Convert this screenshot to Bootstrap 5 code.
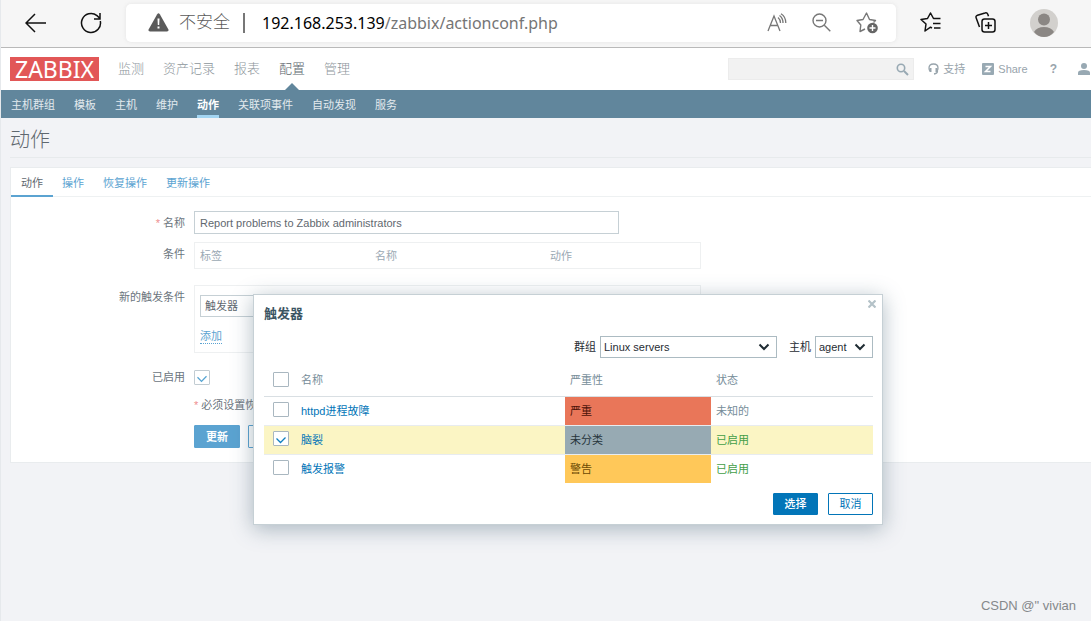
<!DOCTYPE html>
<html lang="zh-CN">
<head>
<meta charset="utf-8">
<meta name="viewport" content="width=device-width, initial-scale=1">
<title>动作</title>
<link href="https://cdn.jsdelivr.net/npm/bootstrap@5.3.0/dist/css/bootstrap.min.css" rel="stylesheet">
<style>
  body { font: 11px/16px "Liberation Sans", "Noto Sans CJK SC", sans-serif; color: #6b757d; background: #f2f3f6; min-height: 100vh; border-left: 1px solid #e6e9ec; overflow-x: hidden; }
  a { text-decoration: none; color: #5ba3d1; }
  svg { display: block; flex: none; }
  .plain-btn { border: 0; background: none; padding: 0; color: inherit; }
  /* browser toolbar */
  .browser-bar { height: 48px; background: #f6f6f6; border-bottom: 1px solid #b9b9b9; padding: 0 33px 2px 24px; color: #111; }
  .reload { margin-left: 33px; }
  .address { height: 38px; margin-left: 24px; background: #fff; border-radius: 5px; box-shadow: 0 0 4px #e4e4e4; padding: 0 17px 0 22px; }
  .address-tools { gap: 25px; color: #777; }
  .browser-tools { margin-left: 24px; gap: 34px; }
  .insecure { font-size: 17px; line-height: 24px; font-weight: 300; color: #5a5a5a; margin-left: 10px; }
  .url-text { font: 16px/24px "Noto Sans", sans-serif; color: #757575; white-space: nowrap; }
  .url-rule { width: 2px; height: 20px; background: #777; margin: 0 17px 0 13px; }
  /* application header */
  .app-header { height: 42px; background: #fff; padding-left: 9px; }
  .brand { background: #e25757; color: #fff; font: 23px/24px "Noto Sans", sans-serif; width: 89px; height: 24px; text-align: center; }
  .main-menu { gap: 19px; margin-left: 19px; font-size: 13px; line-height: 42px; }
  .main-menu a { color: #8d959b; position: relative; font-weight: 300; }
  .main-menu a.active { color: #5d676e; }
  .main-menu a.active::after { content: ""; position: absolute; bottom: 0; left: 50%; margin-left: -7px; border: 7px solid transparent; border-top: 0; border-bottom-color: #61869c; }
  .search-box { width: 186px; height: 22px; background: #f2f2f2; border: 1px solid #ececec; padding-right: 4px; }
  .search-box input { min-width: 0; border: 0; background: none; outline: 0; }
  .tool-links { gap: 17px; margin-left: 14px; }
  .tool-links a { color: #98a4ac; }
  .tool-links .help { font-size: 12px; margin: 0 3px 0 5px; }
  .sub-menu { background: #61869c; height: 28px; padding-left: 10px; gap: 19px; }
  .sub-menu a { color: #e3eaee; line-height: 30px; height: 28px; border-bottom: 3px solid transparent; }
  .sub-menu a.active { color: #fff; font-weight: 700; border-color: #a3d5f2; }
  .page-title { font-size: 20px; line-height: 36px; height: 40px; font-weight: 300; margin: 0 0 9px 9px; padding-top: 4px; border-bottom: 1px solid #e7eaec; color: #5f686f; }
  .panel { background: #fff; border: 1px solid #e9ecee; border-right: 0; margin-left: 9px; padding-bottom: 14px; }
  .tabs { border-bottom: 1px solid #eef1f2; height: 29px; }
  .tabs a { padding: 0 10px; line-height: 30px; height: 29px; }
  .tabs a + a { padding: 0 10px 0 9px; }
  .tabs a.active { color: #5f686f; border-bottom: 2px solid #5ba3d1; }
  .action-form { padding-top: 14px; }
  .form-line > .lbl { width: 174px; flex: none; text-align: right; margin-right: 9px; }
  .star { color: #ee8e8e; }
  .name-input { width: 425px; height: 23px; border: 1px solid #c6d0d5; padding: 0 5px; color: #5f686f; }
  .frame { width: 507px; border: 1px solid #eef0f1; }
  .cond-head th { color: #9ba9b4; font-weight: 400; padding: 0 5px; height: 25px; }
  .cond-head .wide { width: 175px; }
  .new-cond { padding: 9px 5px 8px; }
  .type-select { width: 120px; height: 22px; border: 1px solid #c6d0d5; padding: 0 4px; color: #5f686f; appearance: none; background: #fff; }
  .dotted { border-bottom: 1px dotted #5ba3d1; line-height: 14px; }
  .tick { width: 16px; height: 15px; margin: 0; float: none; border: 1px solid #a9b7c0; display: block; background-size: 16px 14px; }
  .tick[type=checkbox] { border-radius: 1px; }
  .tick[type=checkbox]:checked { background-color: #fff; border-color: #a9b7c0; background-image: url("data:image/svg+xml,%3Csvg xmlns='http://www.w3.org/2000/svg' viewBox='0 0 16 14'%3E%3Cpath d='M3.500 6.500l4 4 5-5' fill='none' stroke='%230f7fc0' stroke-width='1.300'/%3E%3C/svg%3E"); }
  .tick.faded { opacity: .7; }
  .act { width: 45px; height: 22px; border-radius: 1px; font-size: 11px; line-height: 20px; padding: 0; border: 1px solid #0275b8; background: #fff; color: #0275b8; }
  .act.solid { background: #0275b8; color: #fff; font-weight: 500; }
  .act.soft { border-color: #5ba3d1; color: #5ba3d1; width: 46px; height: 23px; }
  .act.soft.solid { background: #5ba3d1; color: #fff; font-weight: 700; }
  /* popup dialog */
  .popup { position: absolute; left: 252px; top: 294px; width: 630px; background: #fff; border: 1px solid #c6d0d5; box-shadow: 0 4px 20px rgba(60,90,110,.4); padding: 9px 9px 9px 10px; color: #1f2c33; }
  .popup h2 { font-size: 13px; line-height: 20px; color: #3c5563; font-weight: 700; margin: 0 0 12px; }
  .close-x { position: absolute; right: 6px; top: 5px; }
  .pick { width: 177px; height: 22px; border: 1px solid #acbbc2; border-radius: 0; padding: 0 20px 0 3px; color: #1f2c33; appearance: none; background: #fff url("data:image/svg+xml,%3Csvg xmlns='http://www.w3.org/2000/svg' viewBox='0 0 12 8'%3E%3Cpath d='M1.500 1.500L6 6l4.500-4.500' fill='none' stroke='%231f2c33' stroke-width='2'/%3E%3C/svg%3E") no-repeat right 6px center / 12px 8px; }
  .pick.narrow { width: 58px; }
  .triggers { margin-top: 7px; table-layout: fixed; }
  .triggers .c-tick { width: 32px; }
  .triggers .c-sev { width: 146px; }
  .triggers .c-state { width: 162px; }
  .triggers th { height: 31px; font-weight: 400; color: #768d99; border-bottom: 1px solid #d9dfe3; padding: 0 5px; }
  .triggers td { height: 29px; padding: 0 5px; border-bottom: 1px solid #e8ecef; background-clip: padding-box; }
  .triggers tr:last-child td { border-bottom-color: transparent; }
  .triggers .sel { background: #fbf5c4; }
  .triggers .tick { margin: 0 0 2px 4px; }
  .triggers a { color: #0275b8; }
  .sev-high { background: #e97659; color: #4b1208; }
  .sev-none { background: #97aab3; color: #26343b; }
  .sev-warn { background: #ffc859; color: #6b4a04; }
  .on { color: #429e47; } .unknown { color: #768d99; }
  .popup-actions { gap: 10px; margin-top: 9px; }
  .credit { position: absolute; right: 15px; bottom: 6px; font: 13px/18px "Liberation Sans", sans-serif; color: #85888b; }
</style>
</head>
<body class="position-relative">

<header class="browser-bar d-flex align-items-center">
  <button class="plain-btn" aria-label="后退"><svg width="22" height="20" viewBox="0 0 22 20" fill="none" stroke="currentColor" stroke-width="1.500"><path d="M21 10H2M10 1L1 10l9 9"/></svg></button>
  <button class="plain-btn reload" aria-label="刷新"><svg width="22" height="22" viewBox="0 0 22 22" fill="none" stroke="currentColor" stroke-width="1.500"><path d="M20.300 9A9.500 9.500 0 1 1 17 3.600L20 6.500M20 1v6h-6"/></svg></button>
  <div class="address d-flex align-items-center flex-grow-1">
    <svg width="21" height="19" viewBox="0 0 21 19"><path d="M9.200 1.200q1.300-2 2.600 0l8.500 15q.9 2-1.300 2.300H2q-2.200-.3-1.300-2.300z" fill="#5a5a5a"/><path d="M9.500 5.500h2l-.3 6.500H9.800zM9.500 13.500h2v2h-2z" fill="#fff"/></svg>
    <span class="insecure">不安全</span>
    <span class="url-rule"></span>
    <span class="url-text flex-grow-1"><span class="text-black">192.168.253.139</span>/zabbix/actionconf.php</span>
    <div class="address-tools d-flex align-items-center">
      <button class="plain-btn" aria-label="朗读"><svg width="20" height="20" viewBox="0 0 20 20" fill="none" stroke="currentColor" stroke-width="1.300"><path d="M1 18L7 3l6 15M3 12.500h8M11 4.500q2.500 2 2.500 5.500M12.500 2.500q3.500 2.500 3.500 7.500M14 .8q4.800 3 4.800 9.200"/></svg></button>
      <button class="plain-btn" aria-label="缩小"><svg width="19" height="19" viewBox="0 0 19 19" fill="none" stroke="currentColor" stroke-width="1.400"><circle cx="7.500" cy="7.500" r="6.500"/><path d="M4 7.500h7M12.300 12.300l6 6"/></svg></button>
      <button class="plain-btn" aria-label="收藏"><svg width="23" height="22" viewBox="0 0 23 22" fill="none" stroke="currentColor" stroke-width="1.400" stroke-linejoin="round"><path d="M9 17l-5 2.500.8-6.500L1 8.500l6-1L10.500 1l3 6.500 6 1-2 2"/><circle cx="16.500" cy="16" r="5.300" fill="#666" stroke="none"/><path d="M16.500 13v6M13.500 16h6" stroke="#fff"/></svg></button>
    </div>
  </div>
  <div class="browser-tools d-flex align-items-center">
    <button class="plain-btn" aria-label="收藏夹"><svg width="21" height="21" viewBox="0 0 21 21" fill="none" stroke="currentColor" stroke-width="1.500" stroke-linejoin="round"><path d="M12 16l-1.500-.8L5 19l1-7-5-4.500 6.500-1L10.500 1l3 5.500h7M13 11.500h7.500M14 16h6.500"/></svg></button>
    <button class="plain-btn" aria-label="集锦"><svg width="21" height="21" viewBox="0 0 21 21" fill="none" stroke="currentColor" stroke-width="1.500"><rect x="7" y="7" width="13" height="13" rx="2.500"/><path d="M13.500 10v7M10 13.500h7M4.500 15L1.200 6q-.8-2 1.300-2.800L10 1q2-.7 2.800 1.300l.7 2"/></svg></button>
    <button class="plain-btn" aria-label="个人资料"><svg width="28" height="28" viewBox="0 0 28 28"><circle cx="14" cy="14" r="14" fill="#d2d0cd"/><circle cx="14" cy="10.500" r="6" fill="#8b8784"/><path d="M4 23q3-5 10-5t10 5q-4 5-10 5t-10-5" fill="#8b8784"/></svg></button>
  </div>
</header>

<nav class="app-header d-flex align-items-center">
  <a class="brand" href="#">ZABBIX</a>
  <div class="main-menu d-flex"><a href="#">监测</a><a href="#">资产记录</a><a href="#">报表</a><a class="active" href="#">配置</a><a href="#">管理</a></div>
  <form class="search-box d-flex align-items-center ms-auto">
    <input class="flex-grow-1" type="text" aria-label="搜索">
    <svg width="13" height="13" viewBox="0 0 13 13" fill="none" stroke="#98a9b3"><circle cx="5" cy="5" r="3.700" stroke-width="1.600"/><path d="M8 8l4 4" stroke-width="2"/></svg>
  </form>
  <div class="tool-links d-flex align-items-center">
    <a href="#" class="d-flex align-items-center gap-1"><svg width="11" height="12" viewBox="0 0 11 12" fill="none" stroke="currentColor" stroke-width="1.300"><path d="M2 8Q1 7 1 5q0-4 4.500-4T10 5q0 2-1 3M9.500 8q0 2.500-3.500 3"/><path d="M2.500 5v4M8.500 5v4" stroke-width="2"/></svg>支持</a>
    <a href="#" class="d-flex align-items-center gap-1"><svg width="12" height="12" viewBox="0 0 12 12"><rect width="12" height="12" rx="1" fill="#98a9b3"/><path d="M3.500 3.500h5l-5 5h5" fill="none" stroke="#fff" stroke-width="1.500"/></svg>Share</a>
    <a href="#" class="help fw-bold">?</a>
    <a href="#" aria-label="用户"><svg width="14" height="12" viewBox="0 0 14 12" fill="#98a9b3"><circle cx="7" cy="3" r="3"/><path d="M1 12V9.500Q1 7 7 7t6 2.500V12z"/></svg></a>
  </div>
</nav>

<nav class="sub-menu d-flex"><a href="#">主机群组</a><a href="#">模板</a><a href="#">主机</a><a href="#">维护</a><a class="active" href="#">动作</a><a href="#">关联项事件</a><a href="#">自动发现</a><a href="#">服务</a></nav>

<main>
  <h1 class="page-title">动作</h1>
  <section class="panel">
    <nav class="tabs d-flex"><a class="active" href="#">动作</a><a href="#">操作</a><a href="#">恢复操作</a><a href="#">更新操作</a></nav>
    <form class="action-form">
      <div class="form-line d-flex align-items-center mb-2">
        <label class="lbl" for="name"><span class="star">*</span> 名称</label>
        <input class="name-input" id="name" type="text" value="Report problems to Zabbix administrators">
      </div>
      <div class="form-line d-flex">
        <span class="lbl pt-1">条件</span>
        <div class="frame"><table class="cond-head w-100"><thead><tr><th class="wide">标签</th><th class="wide">名称</th><th>动作</th></tr></thead></table></div>
      </div>
      <div class="form-line d-flex mt-3">
        <label class="lbl pt-1" for="type">新的触发条件</label>
        <div class="frame new-cond">
          <select class="type-select d-block" id="type"><option>触发器</option></select>
          <div class="mt-2 pt-1"><a href="#" class="dotted d-block" style="width:max-content">添加</a></div>
        </div>
      </div>
      <div class="form-line d-flex align-items-center mt-3">
        <label class="lbl" for="enabled">已启用</label>
        <input class="form-check-input tick faded" id="enabled" type="checkbox" checked>
      </div>
      <div class="form-line d-flex mt-2 pt-1"><span class="lbl"></span><span><span class="star">*</span> 必须设置恢复操作</span></div>
      <div class="form-line d-flex mt-2 pt-1"><span class="lbl"></span><button type="button" class="act soft solid me-2">更新</button><button type="button" class="act soft">克隆</button></div>
    </form>
  </section>
</main>

<section class="popup" role="dialog" aria-labelledby="popup-title">
  <button class="plain-btn close-x" aria-label="关闭"><svg width="8" height="8" viewBox="0 0 8 8" stroke="#b4c2c8" stroke-width="2.200"><path d="M.5.500l7 7M7.500.500l-7 7"/></svg></button>
  <h2 id="popup-title">触发器</h2>
  <div class="d-flex align-items-center justify-content-end">
    <label for="group" class="me-1">群组</label>
    <select id="group" class="pick me-2"><option>Linux servers</option></select>
    <label for="host" class="me-1 ms-1">主机</label>
    <select id="host" class="pick narrow"><option>agent</option></select>
  </div>
  <table class="triggers w-100">
    <colgroup><col class="c-tick"><col><col class="c-sev"><col class="c-state"></colgroup>
    <thead><tr><th><input type="checkbox" class="form-check-input tick" aria-label="全选"></th><th>名称</th><th>严重性</th><th>状态</th></tr></thead>
    <tbody>
      <tr><td><input type="checkbox" class="form-check-input tick" aria-label="httpd进程故障"></td><td><a href="#">httpd进程故障</a></td><td class="sev-high">严重</td><td class="unknown">未知的</td></tr>
      <tr class="sel"><td><input type="checkbox" class="form-check-input tick" aria-label="脑裂" checked></td><td><a href="#">脑裂</a></td><td class="sev-none">未分类</td><td class="on">已启用</td></tr>
      <tr><td><input type="checkbox" class="form-check-input tick" aria-label="触发报警"></td><td><a href="#">触发报警</a></td><td class="sev-warn">警告</td><td class="on">已启用</td></tr>
    </tbody>
  </table>
  <div class="popup-actions d-flex justify-content-end"><button class="act solid">选择</button><button class="act">取消</button></div>
</section>

<div class="credit">CSDN @" vivian</div>
<script src="https://cdn.jsdelivr.net/npm/bootstrap@5.3.0/dist/js/bootstrap.bundle.min.js"></script>
</body>
</html>
